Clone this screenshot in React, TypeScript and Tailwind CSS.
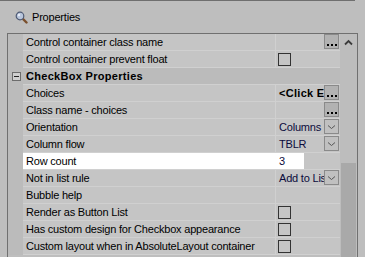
import React from 'react'

type Row =
  | { kind: 'cat'; label: string }
  | { kind: 'prop'; label: string; value?: string; bold?: boolean; control?: 'dots' | 'drop' | 'check'; edit?: boolean }

const rows: Row[] = [
  { kind: 'prop', label: 'Control container class name', control: 'dots' },
  { kind: 'prop', label: 'Control container prevent float', control: 'check' },
  { kind: 'cat', label: 'CheckBox Properties' },
  { kind: 'prop', label: 'Choices', value: '<Click E', bold: true, control: 'dots' },
  { kind: 'prop', label: 'Class name - choices', control: 'dots' },
  { kind: 'prop', label: 'Orientation', value: 'Columns', control: 'drop' },
  { kind: 'prop', label: 'Column flow', value: 'TBLR', control: 'drop' },
  { kind: 'prop', label: 'Row count', value: '3', edit: true },
  { kind: 'prop', label: 'Not in list rule', value: 'Add to List', control: 'drop' },
  { kind: 'prop', label: 'Bubble help' },
  { kind: 'prop', label: 'Render as Button List', control: 'check' },
  { kind: 'prop', label: 'Has custom design for Checkbox appearance', control: 'check' },
  { kind: 'prop', label: 'Custom layout when in AbsoluteLayout container', control: 'check' },
]

function DotsButton() {
  return (
    <div className="w-[15px] h-[15px] mr-[1px] shrink-0 bg-[#b2b2b2] border border-[#8a8a8a] flex items-end justify-center gap-[2px] pb-[2px]">
      <span className="w-[2px] h-[2px] bg-black" />
      <span className="w-[2px] h-[2px] bg-black" />
      <span className="w-[2px] h-[2px] bg-black" />
    </div>
  )
}

function DropButton() {
  return (
    <div className="w-[15px] h-[15px] mr-[1px] shrink-0 bg-[#c0c0c0] border border-[#8a8a8a] flex items-center justify-center">
      <svg width="9" height="6" viewBox="0 0 9 6">
        <path d="M1 1.5 L4.5 4.5 L8 1.5" fill="none" stroke="#555" strokeWidth="1" />
      </svg>
    </div>
  )
}

function Magnifier() {
  return (
    <svg width="13" height="13" viewBox="0 0 13 13">
      <line x1="7.5" y1="7.5" x2="11.5" y2="11.5" stroke="#7a4f2c" strokeWidth="2.4" strokeLinecap="round" />
      <circle cx="5" cy="5" r="3.8" fill="#b9c6dc" stroke="#4e5a74" strokeWidth="1.2" />
      <circle cx="4" cy="4" r="1.2" fill="#e8eef8" />
    </svg>
  )
}

function PropRow({ row }: { row: Row }) {
  if (row.kind === 'cat') {
    return (
      <div className="flex h-[17px]">
        <div className="w-[15px] shrink-0 bg-[#bbbbbb] pl-[4px] pt-[4px]">
          <div className="w-[9px] h-[9px] border border-[#6c6c6c] bg-[#cfcfcf] flex items-center justify-center">
            <span className="w-[5px] h-px bg-[#222]" />
          </div>
        </div>
        <div className="w-[317px] bg-[#bbbbbb] border-b border-[#d0d0d0] pl-[3px] leading-[16px] font-bold tracking-[0.3px] whitespace-nowrap">
          {row.label}
        </div>
      </div>
    )
  }
  return (
    <div className="flex h-[17px]">
      <div className="w-[15px] shrink-0 bg-[#bbbbbb]" />
      <div className="w-[317px] flex border-b border-[#d0d0d0]">
        <div
          className={`w-[253px] shrink-0 pl-[3px] leading-[16px] whitespace-nowrap overflow-hidden tracking-[-0.2px] border-r ${
            row.edit ? 'bg-white border-white' : 'bg-[#c5c5c5] border-[#d0d0d0]'
          }`}
        >
          {row.label}
        </div>
        <div className="w-[64px] flex bg-[#c5c5c5] text-[#0b0b3c]">
          {row.edit ? (
            <div className="w-[28px] bg-white pl-[3px] leading-[16px]">{row.value}</div>
          ) : (
            <>
              <div
                className={`flex-1 pl-[3px] leading-[16px] whitespace-nowrap overflow-hidden ${
                  row.bold ? 'font-bold text-black tracking-[0.3px]' : 'tracking-[-0.2px]'
                }`}
              >
                {row.control === 'check' ? (
                  <div className="mt-[2px] -ml-[1px] w-[13px] h-[13px] border border-[#333]" />
                ) : (
                  row.value
                )}
              </div>
              {row.control === 'dots' && <DotsButton />}
              {row.control === 'drop' && <DropButton />}
            </>
          )}
        </div>
      </div>
    </div>
  )
}

export default function App() {
  return (
    <div className="w-[365px] h-[257px] overflow-hidden flex flex-col bg-[#bebebe] text-[11px] text-black font-['Liberation_Sans',Arial,sans-serif]">
      <div className="h-px w-[355px] bg-[#6f6f6f] shrink-0" />
      <div className="h-[32px] shrink-0 flex items-center pl-[15px] gap-[4px] pt-[1px]">
        <Magnifier />
        <span className="tracking-[-0.2px]">Properties</span>
      </div>
      <div className="ml-[7px] w-[351px] flex-1 flex border-t border-l border-r border-[#707070] overflow-hidden">
        <div className="w-[332px] flex flex-col shrink-0">
          {rows.map((r, i) => (
            <PropRow key={i} row={r} />
          ))}
        </div>
        <div className="w-[17px] flex flex-col bg-[#bdbdbd]">
          <div className="h-[17px] flex items-center justify-center">
            <svg width="9" height="7" viewBox="0 0 9 7">
              <path d="M1 5.5 L4.5 2 L8 5.5" fill="none" stroke="#3c3c3c" strokeWidth="1.8" />
            </svg>
          </div>
          <div className="mt-[112px] ml-[1px] w-[15px] flex-1 bg-[#a9a9a9]" />
        </div>
      </div>
    </div>
  )
}
